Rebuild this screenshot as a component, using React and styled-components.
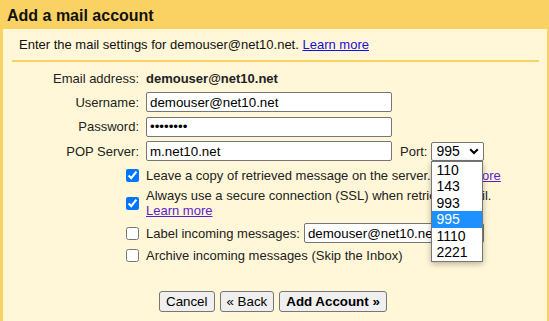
import React from 'react';
import styled, { createGlobalStyle } from 'styled-components';

const GlobalStyle = createGlobalStyle`
  html, body {
    margin: 0;
    padding: 0;
    background: #fff7d7;
  }
  body {
    font-family: "Liberation Sans", Arial, sans-serif;
    font-size: 13px;
    color: #222;
  }
`;

const Dialog = styled.div`
  width: 549px;
  height: 321px;
  box-sizing: border-box;
  border-left: 3px solid #fad163;
  border-right: 2px solid #fad163;
  background: #fff7d7;
  overflow: hidden;
`;

const Header = styled.div`
  height: 29px;
  box-sizing: border-box;
  padding: 7px 4px 0 7px;
  margin-left: -3px;
  margin-right: -2px;
  background: #fad163;
  font-size: 16px;
  line-height: 18px;
  font-weight: bold;
  color: #111;
`;

const Body = styled.div`
  padding: 8px 8px 0 9px;
`;

const Intro = styled.div`
  padding-left: 7px;
  line-height: 15px;
  color: #111;
`;

const Link = styled.a`
  color: ${(p) => (p.$visited ? '#5b1fd1' : '#1a0dde')};
  text-decoration: underline;
  white-space: nowrap;
  cursor: pointer;
`;

const Separator = styled.div`
  height: 2px;
  margin-top: 8px;
  background: #fad163;
`;

const FormGrid = styled.div`
  display: grid;
  grid-template-columns: 127px 1fr;
  column-gap: 7px;
  row-gap: ${(p) => p.$gap || '4.5px'};
  margin-top: ${(p) => p.$top || '0'};
  align-items: center;
`;

const Label = styled.div`
  height: ${(p) => p.$h || 'auto'};
  display: flex;
  align-items: center;
  justify-content: flex-end;
  line-height: 15px;
  white-space: nowrap;
`;

const Value = styled.div`
  font-weight: bold;
  line-height: 15px;
`;

const Field = styled.div`
  display: flex;
  align-items: center;
  height: 20px;
`;

const TextInput = styled.input`
  width: ${(p) => p.$w || '246px'};
  height: 20px;
  box-sizing: border-box;
  margin: 0 0 0 ${(p) => p.$ml || '0'};
  padding: 0 3px;
  border: 1px solid #767676;
  border-radius: 2px;
  background: #fff;
  font-family: "Liberation Sans", Arial, sans-serif;
  font-size: 13.33px;
  color: #000;
  outline: none;
`;

const PortLabel = styled.span`
  margin-left: 8px;
  margin-right: 4px;
`;

const SelectWrap = styled.div`
  position: relative;
  z-index: 2;
`;

const SelectBox = styled.div`
  width: 53px;
  height: 19px;
  box-sizing: border-box;
  padding: 0 4px;
  border: 1px solid #767676;
  border-radius: 2px;
  background: #fff;
  display: flex;
  align-items: center;
  justify-content: space-between;
  font-size: 14px;
  color: #000;
`;

const OptionList = styled.div`
  position: absolute;
  top: 100%;
  left: 0;
  width: 52px;
  box-sizing: border-box;
  border: 1px solid #767676;
  background: #fff;
  box-shadow: 0 2px 6px rgba(0, 0, 0, 0.28);
`;

const Option = styled.div`
  height: 16.5px;
  line-height: 16.5px;
  padding-left: 4px;
  font-size: 14px;
  color: ${(p) => (p.$active ? '#fff' : '#000')};
  background: ${(p) => (p.$active ? '#1e90ff' : 'transparent')};
`;

const Check = styled.input.attrs({ type: 'checkbox' })`
  margin: 0;
  width: 13px;
  height: 13px;
  justify-self: end;
`;

const CheckText = styled.div`
  display: flex;
  align-items: center;
  line-height: 15px;
  white-space: ${(p) => (p.$wrap ? 'normal' : 'nowrap')};
`;

const ButtonBar = styled.div`
  display: flex;
  gap: 5px;
  margin-top: 28px;
  margin-left: 147px;
`;

const Button = styled.button`
  height: 21px;
  box-sizing: border-box;
  margin: 0;
  padding: 1px 6px;
  border: 1px solid #767676;
  border-radius: 3px;
  background: #efefef;
  font-family: "Liberation Sans", Arial, sans-serif;
  font-size: 13.33px;
  font-weight: ${(p) => (p.$primary ? 'bold' : 'normal')};
  color: #000;
`;

const ports = ['110', '143', '993', '995', '1110', '2221'];

function Chevron() {
  return (
    <svg width="10" height="7" viewBox="0 0 10 7">
      <path d="M1.2 1.2 L5 5 L8.8 1.2" fill="none" stroke="#000" strokeWidth="2" />
    </svg>
  );
}

export default function App() {
  return (
    <Dialog>
      <GlobalStyle />
      <Header>Add a mail account</Header>
      <Body>
        <Intro>
          Enter the mail settings for demouser@net10.net. <Link>Learn more</Link>
        </Intro>
        <Separator />

        <FormGrid $top="7px">
          <Label $h="18.5px">Email address:</Label>
          <Value>demouser@net10.net</Value>

          <Label>Username:</Label>
          <Field>
            <TextInput defaultValue="demouser@net10.net" />
          </Field>

          <Label>Password:</Label>
          <Field>
            <TextInput type="password" defaultValue="password" />
          </Field>

          <Label>POP Server:</Label>
          <Field>
            <TextInput defaultValue="m.net10.net" />
            <PortLabel>Port:</PortLabel>
            <SelectWrap>
              <SelectBox>
                <span>995</span>
                <Chevron />
              </SelectBox>
              <OptionList>
                {ports.map((p) => (
                  <Option key={p} $active={p === '995'}>
                    {p}
                  </Option>
                ))}
              </OptionList>
            </SelectWrap>
          </Field>
        </FormGrid>

        <FormGrid $top="7px" $gap="5px">
          <Check defaultChecked />
          <CheckText>
            Leave a copy of retrieved message on the server.&nbsp;<Link $visited>Learn more</Link>
          </CheckText>

          <Check defaultChecked />
          <CheckText $wrap>
            <span>
              Always use a secure connection (SSL) when retrieving mail. <Link $visited>Learn more</Link>
            </span>
          </CheckText>

          <Check />
          <CheckText>
            Label incoming messages:
            <TextInput $w="180px" $ml="4px" defaultValue="demouser@net10.net" />
          </CheckText>

          <Check />
          <CheckText>Archive incoming messages (Skip the Inbox)</CheckText>
        </FormGrid>

        <ButtonBar>
          <Button>Cancel</Button>
          <Button>« Back</Button>
          <Button $primary>Add Account »</Button>
        </ButtonBar>
      </Body>
    </Dialog>
  );
}
